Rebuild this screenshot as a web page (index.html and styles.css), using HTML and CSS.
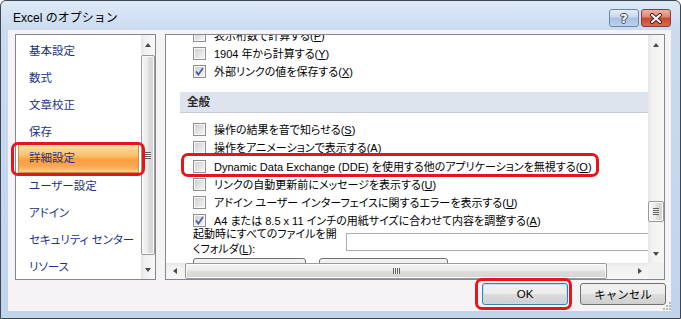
FILE: index.html
```html
<!DOCTYPE html>
<html>
<head>
    <meta charset="utf-8">
    <title>Excel のオプション</title>
    <link rel="stylesheet" href="styles.css">
</head>
<body>
    <div class="window">
        <div class="titlebar">
            <span class="title">Excel のオプション</span>
            <div class="caption-buttons">
                <button class="cap help">?</button>
                <button class="cap close">
                    <svg width="14" height="11" viewBox="0 0 14 11">
                        <path d="M3 2 L11 9 M11 2 L3 9" stroke="#4a2018" stroke-width="4" stroke-linecap="round"/>
                        <path d="M3 2 L11 9 M11 2 L3 9" stroke="#fff" stroke-width="2" stroke-linecap="round"/>
                    </svg>
                </button>
            </div>
        </div>

        <div class="client">
            <div class="main">
                <!-- category list -->
                <div class="nav">
                    <ul class="nav-list">
                        <li>基本設定</li>
                        <li>数式</li>
                        <li>文章校正</li>
                        <li>保存</li>
                        <li class="selected">詳細設定<span class="callout"></span></li>
                        <li>ユーザー設定</li>
                        <li>アドイン</li>
                        <li>セキュリティ センター</li>
                        <li>リソース</li>
                    </ul>
                    <div class="vscroll">
                        <div class="arrow up"></div>
                        <div class="track">
                            <div class="thumb nav-thumb"><span class="grip"></span></div>
                        </div>
                        <div class="arrow down"></div>
                    </div>
                </div>

                <!-- options panel -->
                <div class="panel">
                    <div class="panel-view">
                        <div class="panel-content">
                            <div class="opt"><span class="cb"></span><span>表示桁数で計算する(<u>P</u>)</span></div>
                            <div class="opt"><span class="cb"></span><span>1904 年から計算する(<u>Y</u>)</span></div>
                            <div class="opt"><span class="cb checked"><svg width="9" height="9" viewBox="0 0 9 9"><path d="M1 4.6 L3.4 7.6 L8 1" fill="none" stroke="#3d58a4" stroke-width="1.6"/></svg></span><span>外部リンクの値を保存する(<u>X</u>)</span></div>

                            <div class="section-head">全般</div>

                            <div class="opt"><span class="cb"></span><span>操作の結果を音で知らせる(<u>S</u>)</span></div>
                            <div class="opt"><span class="cb"></span><span>操作をアニメーションで表示する(<u>A</u>)</span></div>
                            <div class="opt dde"><span class="cb"></span><span>Dynamic Data Exchange (DDE) を使用する他のアプリケーションを無視する(<u>O</u>)</span><span class="callout"></span></div>
                            <div class="opt"><span class="cb"></span><span>リンクの自動更新前にメッセージを表示する(<u>U</u>)</span></div>
                            <div class="opt"><span class="cb"></span><span>アドイン ユーザー インターフェイスに関するエラーを表示する(<u>U</u>)</span></div>
                            <div class="opt"><span class="cb checked"><svg width="9" height="9" viewBox="0 0 9 9"><path d="M1 4.6 L3.4 7.6 L8 1" fill="none" stroke="#3d58a4" stroke-width="1.6"/></svg></span><span>A4 または 8.5 x 11 インチの用紙サイズに合わせて内容を調整する(<u>A</u>)</span></div>

                            <div class="setting">
                                <label class="setting-label">起動時にすべてのファイルを開くフォルダ(<u>L</u>):</label>
                                <input class="textbox" type="text">
                            </div>

                            <div class="panel-buttons">
                                <button class="mini-btn wide1"></button>
                                <button class="mini-btn wide2"></button>
                            </div>
                        </div>
                    </div>

                    <div class="vscroll">
                        <div class="arrow up"></div>
                        <div class="track">
                            <div class="thumb panel-thumb"><span class="grip"></span></div>
                        </div>
                        <div class="arrow down"></div>
                    </div>

                    <div class="hscroll">
                        <div class="arrow left"></div>
                        <div class="track">
                            <div class="thumb h-thumb"><span class="grip"></span></div>
                        </div>
                        <div class="arrow right"></div>
                    </div>

                    <div class="corner"></div>
                </div>
            </div>

            <div class="footer">
                <button class="btn default">OK<span class="callout"></span></button>
                <button class="btn">キャンセル</button>
            </div>

            <svg class="size-grip" width="9" height="9" viewBox="0 0 9 9">
                <rect x="7" y="1" width="2" height="2" fill="#b9b9b9"/>
                <rect x="4" y="4" width="2" height="2" fill="#b9b9b9"/>
                <rect x="7" y="4" width="2" height="2" fill="#b9b9b9"/>
                <rect x="1" y="7" width="2" height="2" fill="#b9b9b9"/>
                <rect x="4" y="7" width="2" height="2" fill="#b9b9b9"/>
                <rect x="7" y="7" width="2" height="2" fill="#b9b9b9"/>
            </svg>
        </div>
    </div>
</body>
</html>
```

FILE: styles.css
```css
* {
    box-sizing: border-box;
}

body {
    margin: 0;
    font-family: "Liberation Sans", "Noto Sans CJK JP", sans-serif;
    font-size: 11.5px;
    font-feature-settings: "palt";
    color: #000;
    background: #fff;
}

button {
    font-family: inherit;
    font-size: inherit;
    color: inherit;
    padding: 0;
    cursor: pointer;
}

/* window frame */

.window {
    width: 681px;
    height: 319px;
    display: flex;
    flex-direction: column;
    padding: 0 9px 7px 7px;
    border: 1px solid #3e4652;
    border-radius: 6px 6px 0 0;
    background: linear-gradient(#dde9f7, #cadbf0 29px, #c1d4ec);
}

.titlebar {
    height: 29px;
    flex-shrink: 0;
    display: flex;
    align-items: flex-start;
}

.title {
    padding: 9px 0 0 5px;
    font-size: 12px;
    line-height: 16px;
    font-feature-settings: normal;
}

.caption-buttons {
    margin-left: auto;
    display: flex;
    gap: 2px;
    padding-top: 8px;
}

.cap {
    width: 30px;
    height: 18px;
    border-radius: 3px;
    display: flex;
    align-items: center;
    justify-content: center;
}

.cap.help {
    border: 1px solid #6b85a8;
    background: linear-gradient(#e3ecf8, #c8d8ee 45%, #a9c0e0 50%, #bcd2ee);
    color: #fff;
    font: bold 13px "DejaVu Sans", sans-serif;
    text-shadow: 1px 0 0 #3a4a60, -1px 0 0 #3a4a60, 0 1px 0 #3a4a60, 0 -1px 0 #3a4a60;
}

.cap.close {
    border: 1px solid #8a3b2d;
    background: linear-gradient(#efb5a6, #dc836e 45%, #c8462e 50%, #d66c52);
}

/* client area */

.client {
    position: relative;
    flex: 1;
    background: #f5f3f5;
    padding: 4px 5px 0 7px;
}

.main {
    display: flex;
    gap: 9px;
}

.callout {
    position: absolute;
    border: 3px solid #e8141c;
    border-radius: 7px;
    pointer-events: none;
}

/* category list */

.nav {
    width: 141px;
    height: 246px;
    display: flex;
    border: 1px solid #828790;
    background: #fff;
}

.nav-list {
    flex: 1;
    list-style: none;
    margin: 0;
    padding: 3px 2px 0 2px;
}

.nav-list li {
    position: relative;
    height: 27px;
    line-height: 27px;
    padding-left: 11px;
    color: #1b3385;
    white-space: nowrap;
}

.nav-list li.selected {
    height: 29px;
    margin-top: -2px;
    padding-left: 10px;
    border: 1px solid #c99247;
    background: linear-gradient(#fde0a6, #fcbf6a 40%, #fb9e40 55%, #fca650 78%, #fdd282);
}

.nav-list li.selected .callout {
    top: -3px;
    right: -7px;
    bottom: -4px;
    left: -8px;
}

/* scrollbars */

.vscroll {
    width: 14px;
    display: flex;
    flex-direction: column;
    background: linear-gradient(90deg, #e6e6e6, #f1f1f1 4px, #f7f7f7);
}

.panel .vscroll {
    width: auto;
}

.hscroll {
    display: flex;
    background: linear-gradient(#e6e6e6, #f1f1f1 4px, #f7f7f7);
}

.track {
    flex: 1;
    display: flex;
}

.vscroll .track {
    flex-direction: column;
}

.arrow {
    display: flex;
    align-items: center;
    justify-content: center;
    flex-shrink: 0;
}

.vscroll .arrow {
    height: 19px;
}

.hscroll .arrow {
    width: 17px;
}

.arrow::before {
    content: "";
    border: 3.5px solid transparent;
}

.arrow.up::before {
    border-top: 0;
    border-bottom: 4px solid #4a4a4a;
}

.arrow.down::before {
    border-bottom: 0;
    border-top: 4px solid #4a4a4a;
}

.arrow.left::before {
    border-left: 0;
    border-right: 4px solid #4a4a4a;
}

.arrow.right::before {
    border-right: 0;
    border-left: 4px solid #4a4a4a;
}

.thumb {
    display: flex;
    align-items: center;
    justify-content: center;
    border: 1px solid #9a9a9a;
    border-radius: 2px;
    box-shadow: inset 0 0 0 1px #fbfbfb;
}

.vscroll .thumb {
    background: linear-gradient(90deg, #f6f6f6, #ebebeb 45%, #dcdcdc 55%, #d3d3d3);
}

.hscroll .thumb {
    background: linear-gradient(#f6f6f6, #ebebeb 45%, #dcdcdc 55%, #d3d3d3);
}

.vscroll .grip {
    width: 6px;
    height: 7px;
    background: repeating-linear-gradient(#5e5e5e 0 1px, #f2f2f2 1px 2px);
}

.hscroll .grip {
    width: 7px;
    height: 6px;
    background: repeating-linear-gradient(90deg, #5e5e5e 0 1px, #f2f2f2 1px 2px);
}

.nav-thumb {
    height: 200px;
    margin-top: 1px;
}

.panel-thumb {
    height: 21px;
    margin-top: 147px;
}

.h-thumb {
    width: 422px;
    margin-left: 2px;
}

/* options panel */

.panel {
    width: 500px;
    height: 246px;
    display: grid;
    grid-template-columns: 1fr 16px;
    grid-template-rows: 1fr 16px;
    border: 1px solid #828790;
    background: #fff;
}

.panel-view {
    overflow: hidden;
    font-size: 11px;
}

.panel-content {
    margin-top: -9px;
}

.opt {
    position: relative;
    height: 18px;
    display: flex;
    align-items: center;
    gap: 8px;
    padding-left: 27px;
    white-space: nowrap;
}

.opt.dde {
    margin-top: 1px;
}

.opt.dde .callout {
    top: -4px;
    left: 15px;
    width: 418px;
    height: 24px;
}

.cb {
    width: 13px;
    height: 13px;
    flex-shrink: 0;
    display: flex;
    align-items: center;
    justify-content: center;
    border: 1px solid #8f8f8f;
    background: linear-gradient(135deg, #cdcdcd, #f6f6f6);
    box-shadow: inset 0 0 0 1px #f8f8f8;
}

.section-head {
    height: 21px;
    margin: 12px 0 7px 14px;
    padding-left: 7px;
    line-height: 20px;
    font-size: 11.5px;
    font-weight: bold;
    color: #2c2c2c;
    background: #dde4ee;
    border-bottom: 1px solid #c5ccd6;
}

.setting {
    display: flex;
    align-items: center;
    margin-top: -2px;
    padding-left: 27px;
}

.setting-label {
    width: 148px;
    line-height: 15px;
}

.textbox {
    flex: 1;
    height: 18px;
    margin: 0 -20px 0 5px;
    border: 1px solid #abadb3;
    background: #fff;
}

.panel-buttons {
    display: flex;
    gap: 13px;
    margin-top: 1px;
    padding-left: 27px;
}

.mini-btn {
    height: 22px;
    border: 1px solid #707070;
    border-radius: 3px;
    background: linear-gradient(#f2f2f2, #ebebeb 50%, #dddddd 50%, #cfcfcf);
}

.mini-btn.wide1 {
    width: 113px;
}

.mini-btn.wide2 {
    width: 129px;
}

.corner {
    background: #f0f0f0;
}

/* dialog buttons */

.footer {
    display: flex;
    justify-content: flex-end;
    gap: 12px;
    margin-top: 3px;
}

.btn {
    position: relative;
    width: 86px;
    height: 22px;
    border: 1px solid #707070;
    border-radius: 3px;
    background: linear-gradient(#f2f2f2, #ebebeb 50%, #dddddd 50%, #cfcfcf);
}

.btn.default {
    border-color: #3c7fb1;
    box-shadow: inset 0 0 0 1px #b6e0f8;
}

.btn.default .callout {
    top: -6px;
    right: -5px;
    bottom: -6px;
    left: -8px;
}

.size-grip {
    position: absolute;
    right: 0;
    bottom: 1px;
}
```
